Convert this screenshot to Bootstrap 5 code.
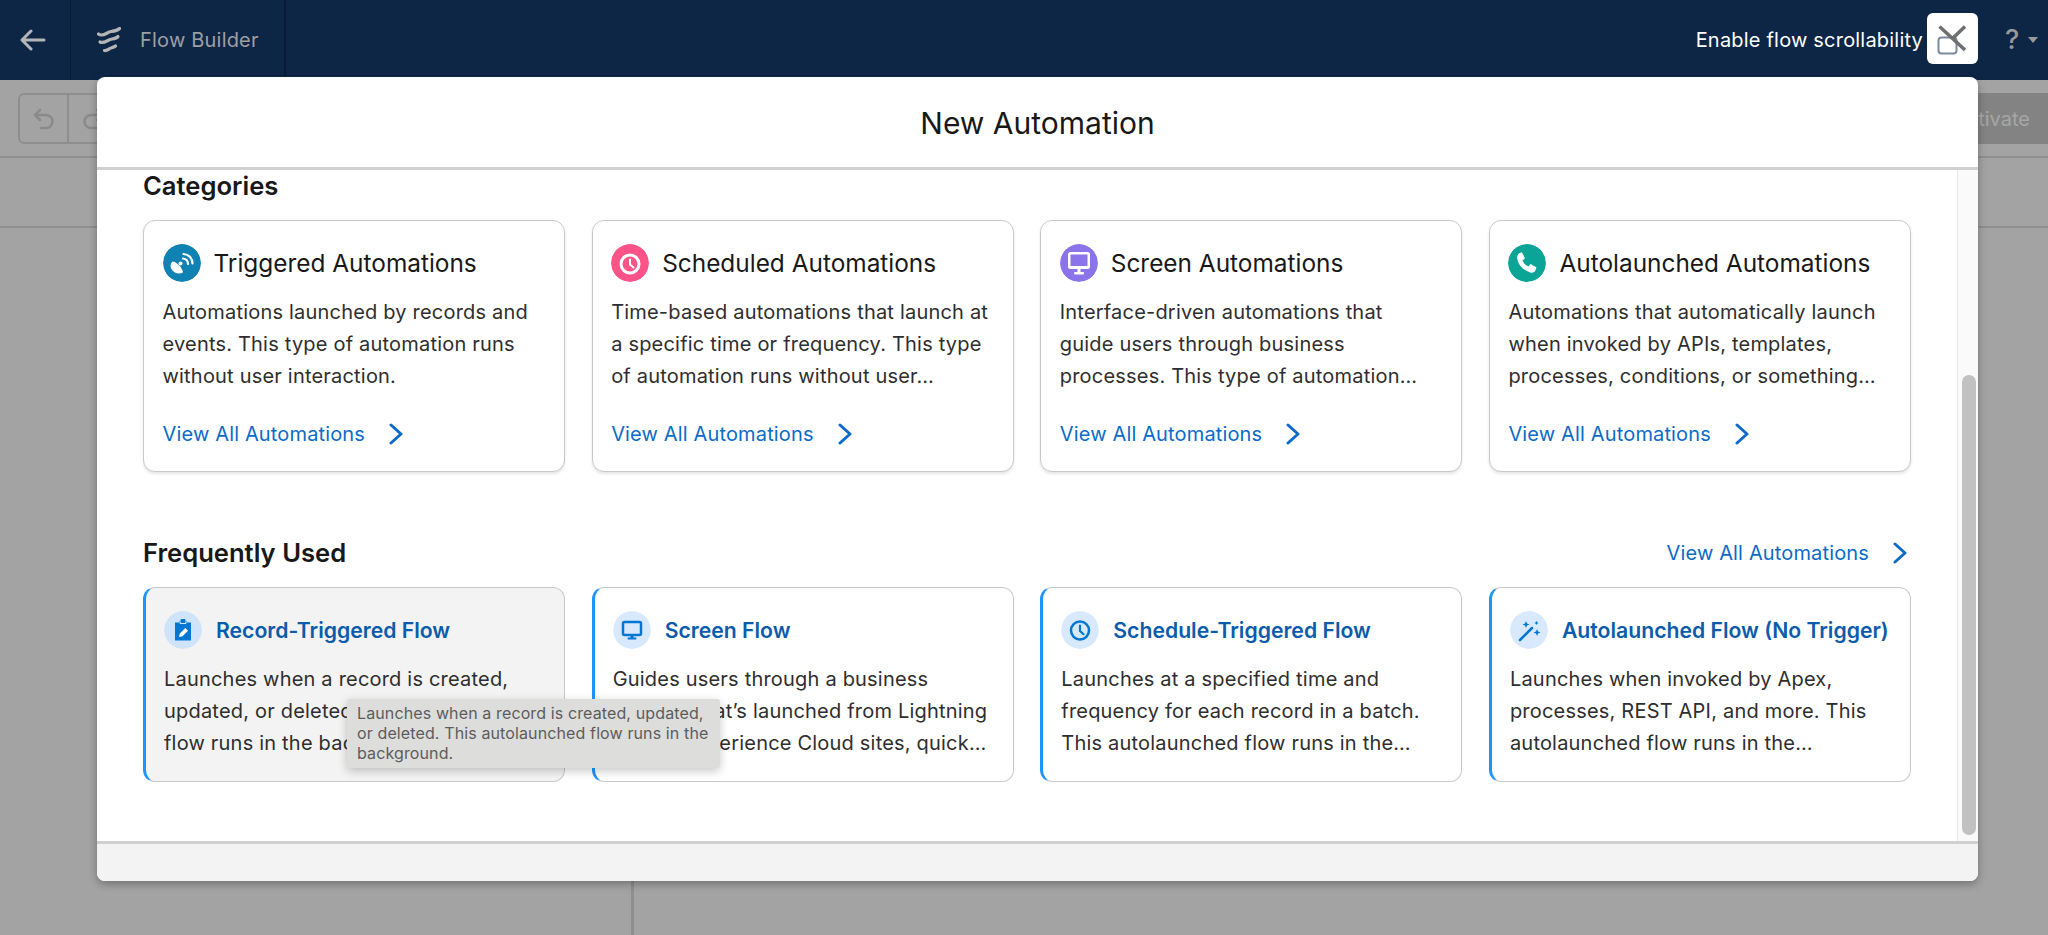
<!DOCTYPE html>
<html lang="en">
<head>
  <meta charset="UTF-8" />
  <meta name="viewport" content="width=device-width, initial-scale=1.0" />
  <title>Flow Builder - New Automation</title>
  <link href="https://cdn.jsdelivr.net/npm/bootstrap@5.3.0/dist/css/bootstrap.min.css" rel="stylesheet" />
  <style>
    html, body { height: 100%; overflow: hidden; }
    body { font-family: Inter, "Liberation Sans", sans-serif; background: #a3a3a3; color: #181818; }

    /* top bar */
    .fb-top { height: 80px; background: #0d2646; padding: 0; flex-wrap: nowrap; }
    .fb-back { width: 71px; height: 80px; padding-right: 5px; border-right: 1px solid #0a1c38; }
    .fb-brand { width: 215px; height: 80px; padding-left: 26px; gap: 19px; border-right: 2px solid #0a1c38; color: #9d9fa3; font-size: 20px; letter-spacing: .2px; }
    .fb-scroll-label { color: #fff; font-size: 20px; letter-spacing: .2px; margin-right: 4px; }
    .fb-scroll-btn { width: 51px; height: 51px; background: #fff; border-radius: 6px; margin-right: 27px; margin-bottom: 3px; }
    .fb-help { color: #98999b; font-size: 27px; font-weight: 500; width: 43px; gap: 9px; }
    .fb-caret { width: 0; height: 0; border-left: 5px solid transparent; border-right: 5px solid transparent; border-top: 6px solid #98999b; }

    /* dimmed page behind */
    .fb-tools { height: 78px; border-bottom: 2px solid #8f8f8f; padding: 13px 0 0 18px; }
    .fb-undo { width: 150px; height: 51px; border: 2px solid #8e8e8e; border-radius: 6px; }
    .fb-undo-cell { width: 49px; border-right: 2px solid #8e8e8e; }
    .fb-activate { width: 120px; height: 51px; margin-left: auto; background: #838383; color: #a6a6a6; font-size: 20px; padding-right: 18px; }
    .fb-strip { height: 70px; border-bottom: 2px solid #8f8f8f; }
    .fb-panel { width: 634px; height: 720px; border-right: 3px solid #8f8f8f; }

    /* modal */
    .fb-modal { position: absolute; left: 97px; top: 77px; width: 1881px; height: 804px; background: #fff; border-radius: 8px; box-shadow: 0 3px 8px rgba(0,0,0,.3); overflow: hidden; }
    .fb-modal-head { height: 93px; border-bottom: 3px solid #d0d0d0; font-size: 30px; padding-top: 3px; flex-shrink: 0; }
    .fb-modal-body { height: 671px; flex-shrink: 0; }
    .fb-content { padding: 1px 46px 0; min-width: 0; width: 1860px; flex: 0 0 1860px; }
    .fb-modal-foot { height: 40px; background: #f3f3f3; border-top: 3px solid #d0d0d0; flex-shrink: 0; }
    .fb-track { width: 21px; flex: 0 0 21px; background: #fafafa; border-left: 1px solid #e8e8e8; padding: 205px 2px 0 4px; }
    .fb-thumb { height: 460px; background: #c1c1c1; border-radius: 7px; }

    .fb-section { font-size: 25.6px; font-weight: 600; line-height: 30px; margin: 0; }
    .fb-cats-head { margin-bottom: 19px; }
    .fb-freq-head { margin-top: 65px; margin-bottom: 18px; }
    .fb-cards { --bs-gutter-x: 26.6px; }

    .fb-card { border: 1.5px solid #c9c9c9; border-radius: 12px; }
    .fb-cat { height: 252px; box-shadow: 0 2px 3px rgba(0,0,0,.1); }
    .fb-cat .card-body { padding: 22.5px 20px 0 18.5px; }
    .fb-flow { height: 195px; border-left: 3px solid #1b96ff; }
    .fb-flow .card-body { padding: 22.5px 16px 0 18px; }
    .fb-flow-on { background: #f3f3f3; }
    .fb-disc { width: 38px; height: 38px; border-radius: 50%; flex-shrink: 0; }
    .fb-cat-title { font-size: 24.4px; font-weight: 400; line-height: 38px; margin: 0 0 0 13px; white-space: nowrap; }
    .fb-flow-title { font-size: 21.2px; font-weight: 600; line-height: 38px; color: #0b5cab; margin: 0 0 0 14px; white-space: nowrap; }
    .fb-desc { font-size: 20px; line-height: 32px; letter-spacing: .2px; color: #2e2e2e; margin: 14px 0 0; }
    .fb-link { color: #0b6bc7; font-size: 20px; line-height: 32px; letter-spacing: .15px; text-decoration: none; gap: 24px; }
    .fb-cat .fb-link { margin-top: 26px; }

    .fb-tip { position: absolute; left: 250px; top: 622px; width: 373px; height: 69px; padding: 4px 10px; background: #dddddc; color: #5c5c5c; font-size: 16px; letter-spacing: .12px; line-height: 20px; border-radius: 3px; box-shadow: 0 3px 10px rgba(0,0,0,.22); }
  </style>
</head>
<body>
  <nav class="navbar fb-top d-flex align-items-center">
    <div class="fb-back d-flex align-items-center justify-content-center">
      <svg width="26" height="22" viewBox="0 0 26 22" fill="none" stroke="#b4b5b7" stroke-width="3" stroke-linecap="round" stroke-linejoin="round"><path d="M24 11H3M11 2l-9 9 9 9"/></svg>
    </div>
    <div class="fb-brand d-flex align-items-center">
      <svg width="24" height="26" viewBox="0 0 24 26" fill="none" stroke="#b4b5b7" stroke-width="3.200" stroke-linecap="round"><path d="M1.500 7C6 10.500 10 5 14 4.500S20.500 3.500 22.500 1.500"/><path d="M3 15c4 2 8-2.500 12-3s5-1 6-2.500"/><path d="M7.500 23.500c3 .5 4.500-2 6.500-2.500s3.500-1 4.500-2"/></svg>
      <span>Flow Builder</span>
    </div>
    <div class="ms-auto d-flex align-items-center">
      <span class="fb-scroll-label">Enable flow scrollability</span>
      <div class="fb-scroll-btn">
        <svg width="51" height="51" viewBox="0 0 51 51" fill="none"><rect x="11.500" y="24.500" width="18" height="16" rx="3" stroke="#7b8aa0" stroke-width="2"/><path d="M12.500 13.500L38 37M38 13.500L26 25" stroke="#6f6f6f" stroke-width="3.500"/></svg>
      </div>
      <div class="fb-help d-flex align-items-center"><span>?</span><span class="fb-caret"></span></div>
    </div>
  </nav>

  <div class="fb-tools d-flex">
    <div class="fb-undo d-flex">
      <div class="fb-undo-cell d-flex align-items-center justify-content-center">
        <svg width="22" height="22" viewBox="0 0 22 22" fill="none" stroke="#8a8a8a" stroke-width="2.500" stroke-linecap="round" stroke-linejoin="round"><path d="M7 2L2 7l5 5M2 7h11a6.500 6.500 0 0 1 0 13H8"/></svg>
      </div>
      <div class="fb-undo-cell d-flex align-items-center justify-content-center">
        <svg width="22" height="22" viewBox="0 0 22 22" fill="none" stroke="#8a8a8a" stroke-width="2.500" stroke-linecap="round" stroke-linejoin="round"><path d="M15 2l5 5-5 5M20 7H9a6.500 6.500 0 0 0 0 13h5"/></svg>
      </div>
    </div>
    <div class="fb-activate d-flex align-items-center justify-content-end">Activate</div>
  </div>
  <div class="fb-strip"></div>
  <div class="fb-panel"></div>

  <div class="fb-modal d-flex flex-column">
    <div class="fb-modal-head d-flex align-items-center justify-content-center">New Automation</div>
    <div class="fb-modal-body d-flex">
      <div class="fb-content">
        <h2 class="fb-section fb-cats-head">Categories</h2>
        <div class="row fb-cards">
          <div class="col-3">
            <div class="card fb-card fb-cat"><div class="card-body">
              <div class="d-flex align-items-center">
                <svg class="fb-disc" viewBox="0 0 38 38"><circle cx="19" cy="19" r="19" fill="#0f82b3"/><path d="M9.500 17.500c3.500 0 10 6 10.500 11-3.500 2-8 1-10.500-2-2.500-3-2.500-6.500 0-9z" fill="#fff"/><circle cx="17.500" cy="19.500" r="2" fill="#fff"/><path d="M20 14.500c3 .3 5 2.500 5 5.500M20.500 10c5.500.3 9 4.500 9 9.500" fill="none" stroke="#fff" stroke-width="2.200" stroke-linecap="round"/></svg>
                <h3 class="fb-cat-title">Triggered Automations</h3>
              </div>
              <p class="fb-desc">Automations launched by records and events. This type of automation runs without user interaction.</p>
              <a href="#" class="fb-link d-flex align-items-center">View All Automations
                <svg width="14" height="22" viewBox="0 0 14 22" fill="none" stroke="#0b6bc7" stroke-width="3" stroke-linecap="round" stroke-linejoin="round"><path d="M2 2l10 9-10 9"/></svg></a>
            </div></div>
          </div>
          <div class="col-3">
            <div class="card fb-card fb-cat"><div class="card-body">
              <div class="d-flex align-items-center">
                <svg class="fb-disc" viewBox="0 0 38 38"><circle cx="19" cy="19" r="19" fill="#fe5389"/><circle cx="19" cy="20" r="9" fill="none" stroke="#fff" stroke-width="3"/><path d="M19 15.500V20.500l3.500 3" fill="none" stroke="#fff" stroke-width="2" stroke-linecap="round"/></svg>
                <h3 class="fb-cat-title">Scheduled Automations</h3>
              </div>
              <p class="fb-desc">Time-based automations that launch at a specific time or frequency. This type of automation runs without user…</p>
              <a href="#" class="fb-link d-flex align-items-center">View All Automations
                <svg width="14" height="22" viewBox="0 0 14 22" fill="none" stroke="#0b6bc7" stroke-width="3" stroke-linecap="round" stroke-linejoin="round"><path d="M2 2l10 9-10 9"/></svg></a>
            </div></div>
          </div>
          <div class="col-3">
            <div class="card fb-card fb-cat"><div class="card-body">
              <div class="d-flex align-items-center">
                <svg class="fb-disc" viewBox="0 0 38 38"><circle cx="19" cy="19" r="19" fill="#8b74e9"/><rect x="8" y="8" width="22" height="17" rx="2.500" fill="#fff"/><rect x="10.500" y="10.500" width="17" height="11.500" fill="#8b74e9"/><rect x="17.500" y="25" width="3" height="3" fill="#fff"/><rect x="14" y="28" width="10" height="2.500" rx="1" fill="#fff"/></svg>
                <h3 class="fb-cat-title">Screen Automations</h3>
              </div>
              <p class="fb-desc">Interface-driven automations that<br>guide users through business processes. This type of automation…</p>
              <a href="#" class="fb-link d-flex align-items-center">View All Automations
                <svg width="14" height="22" viewBox="0 0 14 22" fill="none" stroke="#0b6bc7" stroke-width="3" stroke-linecap="round" stroke-linejoin="round"><path d="M2 2l10 9-10 9"/></svg></a>
            </div></div>
          </div>
          <div class="col-3">
            <div class="card fb-card fb-cat"><div class="card-body">
              <div class="d-flex align-items-center">
                <svg class="fb-disc" viewBox="0 0 38 38"><circle cx="19" cy="19" r="19" fill="#0aa596"/><path d="M10 9.500l3.800-1.300 3.200 6-2.500 2.200c.9 2.600 3.200 5 5.800 6l2.300-2.300 5.900 3.300-1.300 3.700c-1 1.400-3 1.900-5 1.300-6.800-2-12.500-8-13-14.500-.1-2 .8-3.600 1.800-4.400z" fill="#fff"/></svg>
                <h3 class="fb-cat-title">Autolaunched Automations</h3>
              </div>
              <p class="fb-desc">Automations that automatically launch when invoked by APIs, templates, processes, conditions, or something…</p>
              <a href="#" class="fb-link d-flex align-items-center">View All Automations
                <svg width="14" height="22" viewBox="0 0 14 22" fill="none" stroke="#0b6bc7" stroke-width="3" stroke-linecap="round" stroke-linejoin="round"><path d="M2 2l10 9-10 9"/></svg></a>
            </div></div>
          </div>
        </div>

        <div class="fb-freq-head d-flex align-items-center justify-content-between">
          <h2 class="fb-section">Frequently Used</h2>
          <a href="#" class="fb-link d-flex align-items-center me-1">View All Automations
            <svg width="14" height="22" viewBox="0 0 14 22" fill="none" stroke="#0b6bc7" stroke-width="3" stroke-linecap="round" stroke-linejoin="round"><path d="M2 2l10 9-10 9"/></svg></a>
        </div>
        <div class="row fb-cards">
          <div class="col-3">
            <div class="card fb-card fb-flow fb-flow-on"><div class="card-body">
              <div class="d-flex align-items-center">
                <svg class="fb-disc" viewBox="0 0 38 38"><circle cx="19" cy="19" r="19" fill="#cfe4fa"/><path d="M11 11.500h4V10h8v1.500h4v18H11z" fill="#0176d3"/><rect x="15.500" y="9" width="7" height="4" rx="1" fill="#cfe4fa"/><rect x="16.500" y="8" width="5" height="4" rx="1" fill="#0176d3"/><path d="M15 26l.8-3.500 5.500-5.500 2.700 2.700-5.500 5.500z" fill="#fff"/></svg>
                <h3 class="fb-flow-title">Record-Triggered Flow</h3>
              </div>
              <p class="fb-desc">Launches when a record is created, updated, or deleted. This autolaunched flow runs in the background.</p>
            </div></div>
          </div>
          <div class="col-3">
            <div class="card fb-card fb-flow"><div class="card-body">
              <div class="d-flex align-items-center">
                <svg class="fb-disc" viewBox="0 0 38 38"><circle cx="19" cy="19" r="19" fill="#d8e9fd"/><rect x="10" y="11" width="18" height="13" rx="1.500" fill="none" stroke="#0176d3" stroke-width="2.500"/><rect x="17.500" y="24" width="3" height="3" fill="#0176d3"/><rect x="14.500" y="26.500" width="9" height="2" rx="1" fill="#0176d3"/></svg>
                <h3 class="fb-flow-title">Screen Flow</h3>
              </div>
              <p class="fb-desc">Guides users through a business process that’s launched from Lightning pages, Experience Cloud sites, quick…</p>
            </div></div>
          </div>
          <div class="col-3">
            <div class="card fb-card fb-flow"><div class="card-body">
              <div class="d-flex align-items-center">
                <svg class="fb-disc" viewBox="0 0 38 38"><circle cx="19" cy="19" r="19" fill="#d8e9fd"/><circle cx="19" cy="19.500" r="9" fill="none" stroke="#0176d3" stroke-width="2.500"/><path d="M19 14.500v5.500l3.500 3.200" fill="none" stroke="#0176d3" stroke-width="2.200" stroke-linecap="round"/></svg>
                <h3 class="fb-flow-title">Schedule-Triggered Flow</h3>
              </div>
              <p class="fb-desc">Launches at a specified time and frequency for each record in a batch. This autolaunched flow runs in the…</p>
            </div></div>
          </div>
          <div class="col-3">
            <div class="card fb-card fb-flow"><div class="card-body">
              <div class="d-flex align-items-center">
                <svg class="fb-disc" viewBox="0 0 38 38"><circle cx="19" cy="19" r="19" fill="#d8e9fd"/><path d="M10 29l12-12" stroke="#0176d3" stroke-width="2.500" stroke-linecap="round"/><path d="M16 10l1 2.500 2.500 1-2.500 1-1 2.500-1-2.500-2.500-1 2.500-1zM27 18l1 2.500 2.500 1-2.500 1-1 2.500-1-2.500-2.500-1 2.500-1zM26.500 10l.7 1.300 1.300.7-1.300.7-.7 1.300-.7-1.300-1.300-.7 1.300-.7z" fill="#0176d3"/></svg>
                <h3 class="fb-flow-title">Autolaunched Flow (No Trigger)</h3>
              </div>
              <p class="fb-desc">Launches when invoked by Apex, processes, REST API, and more. This autolaunched flow runs in the…</p>
            </div></div>
          </div>
        </div>
      </div>
      <div class="fb-track"><div class="fb-thumb"></div></div>
    </div>
    <div class="fb-modal-foot"></div>
    <div class="fb-tip">Launches when a record is created, updated, or deleted. This autolaunched flow runs in the background.</div>
  </div>

  <script src="https://cdn.jsdelivr.net/npm/bootstrap@5.3.0/dist/js/bootstrap.bundle.min.js"></script>
</body>
</html>
